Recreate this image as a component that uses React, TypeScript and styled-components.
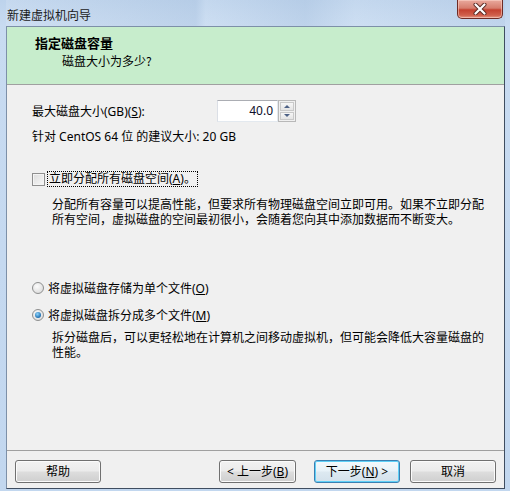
import React from "react";
import styled, { createGlobalStyle, css } from "styled-components";

const Global = createGlobalStyle`
  html, body { margin: 0; padding: 0; }
  body {
    font-family: "Noto Sans", "Noto Sans CJK SC", sans-serif;
    font-size: 12px;
    color: #000;
  }
  * { box-sizing: border-box; }
`;

const Window = styled.div`
  width: 510px;
  height: 491px;
  display: flex;
  flex-direction: column;
  padding: 0 5px 2px 6px;
  background: linear-gradient(180deg, #bdd3ec 0px, #c8dbf1 26px, #c2d7ef 100%);
  overflow: hidden;
`;

const TitleBar = styled.div`
  height: 26px;
  display: flex;
  align-items: flex-start;
  justify-content: space-between;
  background: linear-gradient(90deg, rgba(255,255,255,0.12) 0%, rgba(160,185,215,0.25) 38%, rgba(255,255,255,0.1) 40%, rgba(160,185,215,0.25) 60%, rgba(255,255,255,0.1) 70%, rgba(160,185,215,0.2) 100%);
`;

const Title = styled.div`
  height: 26px;
  display: flex;
  align-items: center;
  padding: 3px 0 0 1px;
  font-size: 12px;
  color: #1b1b1b;
  font-family: "Noto Sans CJK SC", sans-serif;
`;

const CloseButton = styled.div`
  width: 46px;
  height: 19px;
  margin-right: 2px;
  border: 1px solid #6e2b25;
  border-top: none;
  border-radius: 0 0 5px 5px;
  background: linear-gradient(180deg, #e9a99d 0%, #d67d6d 45%, #c4412f 55%, #d0604c 85%, #e49b87 100%);
  box-shadow: inset 0 0 0 1px rgba(255, 220, 210, 0.5);
  display: flex;
  align-items: center;
  justify-content: center;
`;

const Client = styled.div`
  flex: 1;
  display: flex;
  flex-direction: column;
  background: #f0f0f0;
  border-style: solid;
  border-width: 1px;
  border-color: #7d90a8 #3f4d60 #3f4d60 #7d90a8;
`;

const Header = styled.div`
  height: 58px;
  background: #c7edcc;
  border-bottom: 1px solid #a0a0a0;
  padding: 8px 0 0 28px;
  font-family: "Noto Sans CJK SC", sans-serif;
`;

const HeaderTitle = styled.div`
  font-size: 13px;
  font-weight: bold;
  line-height: 16px;
`;

const HeaderSub = styled.div`
  font-size: 12px;
  line-height: 15px;
  margin: 2px 0 0 27px;
`;

const Body = styled.div`
  flex: 1;
  display: flex;
  flex-direction: column;
  padding: 15px 0 0 25px;
  line-height: 15px;
`;

const SizeRow = styled.div`
  display: flex;
  align-items: center;
  height: 22px;
`;

const FieldLabel = styled.div`
  width: 185px;
`;

const SpinBox = styled.div`
  display: flex;
  height: 22px;
`;

const SpinInput = styled.div`
  width: 61px;
  height: 22px;
  background: #fff;
  border: 1px solid #e3e9ef;
  border-top-color: #abadb3;
  border-left-color: #dbdfe6;
  text-align: right;
  padding: 0 4px 0 0;
  line-height: 20px;
  font-size: 12px;
  color: #0d0d2a;
`;

const SpinButtons = styled.div`
  width: 18px;
  height: 22px;
  display: flex;
  flex-direction: column;
  gap: 1px;
  padding: 1px;
  border: 1px solid #b8b8b8;
  background: #f0f0f0;
`;

const SpinBtn = styled.div<{ $up?: boolean }>`
  flex: 1;
  border: 1px solid #c9c9c9;
  background: linear-gradient(180deg, #f6f6f6, #e4e4e4);
  display: flex;
  align-items: center;
  justify-content: center;
  &::after {
    content: "";
    width: 0;
    height: 0;
    border-left: 3px solid transparent;
    border-right: 3px solid transparent;
    ${(p) =>
      p.$up
        ? css`border-bottom: 3px solid #4d6185;`
        : css`border-top: 3px solid #4d6185;`}
  }
`;

const InfoText = styled.div`
  margin-top: 7px;
`;

const OptionRow = styled.div<{ $gap: number }>`
  display: flex;
  align-items: center;
  height: 16px;
  margin-top: ${(p) => p.$gap}px;
`;

const CheckBox = styled.div`
  width: 13px;
  height: 13px;
  border: 1px solid #8f8f8f;
  background: linear-gradient(135deg, #dcdcdc, #f8f8f8);
  box-shadow: inset 0 0 0 1px #f4f4f4;
  margin-right: 2px;
`;

const FocusLabel = styled.div`
  border: 1px dotted #000;
  padding: 0 1px;
  line-height: 14px;
`;

const Radio = styled.div<{ $checked?: boolean }>`
  width: 12px;
  height: 12px;
  border-radius: 50%;
  border: 1px solid #8e8f8f;
  background: radial-gradient(circle at 40% 35%, #fcfcfc, #d4d4d4);
  margin-right: 4px;
  display: flex;
  align-items: center;
  justify-content: center;
  ${(p) =>
    p.$checked &&
    css`
      &::after {
        content: "";
        width: 6px;
        height: 6px;
        border-radius: 50%;
        background: radial-gradient(circle at 40% 35%, #8fd4fb, #1f6fb1 70%, #174e80);
      }
    `}
`;

const Desc = styled.div<{ $gap: number }>`
  margin-top: ${(p) => p.$gap}px;
  padding-left: 20px;
  font-family: "Noto Sans CJK SC", sans-serif;
`;

const Footer = styled.div`
  display: flex;
  align-items: center;
  border-top: 1px solid #a0a0a0;
  padding: 9px 8px 5px 8px;
`;

const Spacer = styled.div`
  flex: 1;
`;

const Button = styled.div<{ $w: number; $gap?: number; $default?: boolean }>`
  width: ${(p) => p.$w}px;
  height: 23px;
  margin-right: ${(p) => p.$gap ?? 0}px;
  border: 1px solid #707070;
  border-radius: 3px;
  background: linear-gradient(180deg, #f2f2f2 0%, #ebebeb 48%, #dddddd 52%, #cfcfcf 100%);
  box-shadow: inset 0 0 0 1px #fbfbfb;
  display: flex;
  align-items: center;
  justify-content: center;
  font-size: 12px;
  line-height: 15px;
  ${(p) =>
    p.$default &&
    css`
      border-color: #3c7fb1;
      box-shadow: inset 0 0 0 1px #5fd0f7;
      background: linear-gradient(180deg, #f4f9fc 0%, #e8f2f8 48%, #dde9f1 52%, #d3e1eb 100%);
    `}
`;

const U = styled.span`
  text-decoration: underline;
`;

export default function App() {
  return (
    <>
      <Global />
      <Window>
        <TitleBar>
          <Title>新建虚拟机向导</Title>
          <CloseButton>
            <svg width="14" height="12" viewBox="0 0 14 12">
              <path d="M2.5 1.5 L11.5 10.5 M11.5 1.5 L2.5 10.5" stroke="#5a2a24" strokeWidth="4" strokeLinecap="round" />
              <path d="M2.5 1.5 L11.5 10.5 M11.5 1.5 L2.5 10.5" stroke="#ffffff" strokeWidth="2.2" strokeLinecap="round" />
            </svg>
          </CloseButton>
        </TitleBar>
        <Client>
          <Header>
            <HeaderTitle>指定磁盘容量</HeaderTitle>
            <HeaderSub>磁盘大小为多少?</HeaderSub>
          </Header>
          <Body>
            <SizeRow>
              <FieldLabel>
                最大磁盘大小(GB)(<U>S</U>):
              </FieldLabel>
              <SpinBox>
                <SpinInput>40.0</SpinInput>
                <SpinButtons>
                  <SpinBtn $up />
                  <SpinBtn />
                </SpinButtons>
              </SpinBox>
            </SizeRow>
            <InfoText>针对 CentOS 64 位 的建议大小: 20 GB</InfoText>
            <OptionRow $gap={27}>
              <CheckBox />
              <FocusLabel>
                立即分配所有磁盘空间(<U>A</U>)。
              </FocusLabel>
            </OptionRow>
            <Desc $gap={9}>
              分配所有容量可以提高性能，但要求所有物理磁盘空间立即可用。如果不立即分配
              <br />
              所有空间，虚拟磁盘的空间最初很小，会随着您向其中添加数据而不断变大。
            </Desc>
            <OptionRow $gap={54}>
              <Radio />
              将虚拟磁盘存储为单个文件(<U>O</U>)
            </OptionRow>
            <OptionRow $gap={11}>
              <Radio $checked />
              将虚拟磁盘拆分成多个文件(<U>M</U>)
            </OptionRow>
            <Desc $gap={6}>
              拆分磁盘后，可以更轻松地在计算机之间移动虚拟机，但可能会降低大容量磁盘的
              <br />
              性能。
            </Desc>
          </Body>
          <Footer>
            <Button $w={86}>帮助</Button>
            <Spacer />
            <Button $w={77} $gap={18}>
              &lt; 上一步(<U>B</U>)
            </Button>
            <Button $w={86} $gap={10} $default>
              下一步(<U>N</U>) &gt;
            </Button>
            <Button $w={86}>取消</Button>
          </Footer>
        </Client>
      </Window>
    </>
  );
}
